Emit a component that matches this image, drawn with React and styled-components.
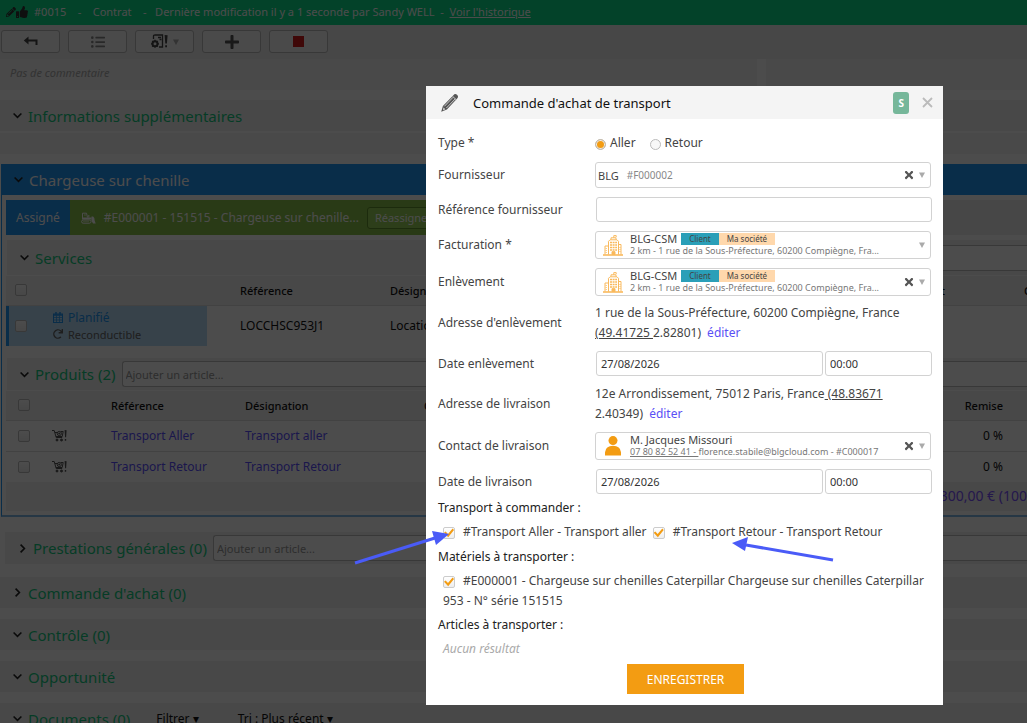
import { useState } from "react";
import { FaListUl, FaPencilAlt, FaPlus, FaRedo, FaThumbsUp, FaTimes } from "react-icons/fa";
import styled, { createGlobalStyle } from "styled-components";

const GlobalStyle = createGlobalStyle`
  * {
    box-sizing: border-box;
  }
  body {
    margin: 0;
    background: #fff;
    color: #444;
    font-family: "Noto Sans", sans-serif;
    font-size: 12px;
  }
  button, input {
    font-family: inherit;
    font-size: inherit;
    color: inherit;
  }
`;

/* ---------- icons ---------- */

const ChevronDown = () => (
  <svg width="9" height="9" viewBox="0 0 9 9" fill="none" stroke="currentColor" strokeWidth="1.6">
    <path d="M0.6 2.5l3.9 3.8 3.9-3.8" />
  </svg>
);

const ChevronRight = () => (
  <svg width="9" height="9" viewBox="0 0 9 9" fill="none" stroke="currentColor" strokeWidth="1.6">
    <path d="M2.6 0.6l3.8 3.9-3.8 3.9" />
  </svg>
);

const CaretIcon = () => (
  <svg width="6" height="6" viewBox="0 0 6 6" fill="#aaa">
    <path d="M0 0.5h6L3 6z" />
  </svg>
);

const ReplyIcon = () => (
  <svg width="15" height="11" viewBox="0 0 15 11" fill="none" stroke="#444" strokeWidth="2">
    <path d="M3 4.5h10.5V9" />
    <path d="M5.5 0.5v8L0.8 4.5z" fill="#444" stroke="none" />
  </svg>
);

const GearDocIcon = () => (
  <svg width="19" height="15" viewBox="0 0 19 15" fill="none" stroke="#444" strokeWidth="1.3">
    <path d="M3.5 5V2.2Q3.5 1 5 1h7.5v12H9" />
    <path d="M8 3.5h3M9.5 5.5h2" />
    <circle cx="5" cy="9.8" r="2.5" strokeWidth="2" />
    <path d="M5 5.8v1.4M5 12.4v1.4M1 9.8h1.4M7.6 9.8H9M2.2 7l1 1M6.8 11.6l1 1M7.8 7l-1 1M3.2 11.6l-1 1" />
    <path d="M14.6 1l3 .2-.7 8.4h-1.6zM15.2 11.3h1.8v2h-1.8z" fill="#444" stroke="none" />
  </svg>
);

const CartIcon = () => (
  <svg width="15" height="13" viewBox="0 0 15 13" fill="none" stroke="#555">
    <path d="M0 1.5h2.2l2 7h6M3 3.5h2M9 2.5h2.2l-1 5H4" />
    <circle cx="7.3" cy="4.5" r="2.1" />
    <path d="M6.4 4.5h1.8M7.3 3.5v2" />
    <circle cx="5" cy="11" r="1" fill="#555" />
    <circle cx="9.5" cy="11" r="1" fill="#555" />
    <path d="M12.6 1l2 .2-.5 7h-1zM12.8 10h1.4v1.8h-1.4z" fill="#555" stroke="none" />
  </svg>
);

const CalendarIcon = () => (
  <svg width="10" height="11" viewBox="0 0 10 11" fill="none" stroke="#2196f3">
    <rect x="0.5" y="2" width="9" height="8.5" />
    <path d="M0.5 3h9M3 0v3M7 0v3" strokeWidth="1.5" />
    <path d="M0.5 5.5h9M0.5 8h9M3.5 3.5v7M6.5 3.5v7" strokeWidth="0.7" />
  </svg>
);

const DozerIcon = () => (
  <svg width="15" height="12" viewBox="0 0 15 12" fill="none" stroke="#fff">
    <path d="M1.5 6V1.2h4l1 4.3M3.2 3h1.6M7.8 5.5V3" />
    <path d="M1 5.5h9.5v2H1z" fill="#fff" stroke="none" />
    <rect x="0.6" y="8" width="9.4" height="3.2" rx="1.6" />
    <path d="M2.5 9.6h5.6" strokeDasharray="1 1" />
    <path d="M10.5 7.5V4.5h1.6l1.2 1.6.4 2.7 1 2.7h-2.6l-1.6-2.5" fill="#fff" stroke="none" />
  </svg>
);

const PencilIcon = () => (
  <svg width="19" height="20" viewBox="0 0 19 20">
    <path d="M1.2 18.8L2.9 13 13.4 2.2Q15-.1 17 1.7q2 1.9.2 3.7L6.9 16.6z" fill="#555" />
    <path d="M4.4 13.3L13 4.3M6.4 15L15.3 5.8" stroke="#e4e4e4" strokeWidth="0.8" />
    <path d="M12.6 3.3l3.6 3.4" stroke="#e4e4e4" strokeWidth="0.8" />
    <path d="M3.4 14.4l2 1.9-2.3.9z" fill="#ddd" />
  </svg>
);

const BuildingIcon = () => (
  <svg width="20" height="21" viewBox="0 0 20 21" fill="none" stroke="#f9b95c">
    <path d="M0 20h20" strokeWidth="1.6" />
    <path d="M5.5 19.5V6.3L7 4.8h7l1.5 1.5v13.2M2 19.5V11h3.5M15.5 9.5H18v10" />
    <path d="M8 4.5V2.8h5v1.7M10.8 2.8V0.6h2.4v1.6" />
    <path d="M7 7.5h7M7 10h7M7 12.5h7M7 15h7" strokeWidth="1.5" strokeDasharray="2 0.6" />
    <path d="M3.2 13v5M17 12v6" strokeDasharray="1 1" />
    <path d="M9 19.5v-2.8h3v2.8z" fill="#f9b95c" />
  </svg>
);

const PersonIcon = () => (
  <svg width="16" height="20" viewBox="0 0 16 20" fill="#f39c12">
    <circle cx="8" cy="4.6" r="4.5" />
    <path d="M0 19.5v-3.2Q0.6 9.8 8 9.8t8 6.5v3.2z" />
  </svg>
);

/* ---------- page behind the dialog ---------- */

const Page = styled.main`
  height: 100vh;
  overflow: hidden;
`;

const TopBar = styled.header`
  display: flex;
  align-items: center;
  height: 25px;
  padding: 0 6px 2px;
  background: #0bdc8a;
  color: #fff;
  font-size: 11px;
  white-space: pre;

  a {
    color: inherit;
  }
`;

const StatusIcon = styled.span`
  display: flex;
  align-items: center;
  width: 28px;
  color: #333;
`;

const Toolbar = styled.div`
  display: flex;
  gap: 8px;
  height: 34px;
  padding: 5px 1px;
  background: #eee;
`;

const ToolButton = styled.button`
  display: flex;
  align-items: center;
  justify-content: center;
  gap: 4px;
  width: 59px;
  height: 23px;
  padding: 0;
  background: #f7f7f7;
  border: 1px solid #bbb;
  border-radius: 3px;
  color: #555;
`;

const RedSquare = styled.span`
  width: 11px;
  height: 11px;
  background: #d31c1c;
`;

const Comments = styled.div`
  display: grid;
  grid-template-columns: 757fr 261fr;
  gap: 9px;
  height: 31px;
  margin-bottom: 10px;

  p {
    margin: 0;
    padding: 0 10px;
    line-height: 28px;
    background: #f3f3f3;
    color: #aaa;
    font-size: 11px;
    font-style: italic;
  }
`;

const Section = styled.section`
  display: flex;
  align-items: center;
  min-height: ${(p) => p.$height || 31}px;
  margin: 0 0 ${(p) => p.$after || 11}px ${(p) => (p.$nested ? 5 : 0)}px;
  padding-left: ${(p) => (p.$blue ? 12 : 13)}px;
  background: ${(p) => (p.$blue ? "#2196f3" : "#f1f1f1")};
  color: #222;

  h2 {
    margin: 0 0 0 6px;
    color: ${(p) => (p.$blue ? "#fff" : "#14c97f")};
    font-size: 15px;
    font-weight: 400;
    white-space: nowrap;
  }
`;

const Panel = styled.div`
  height: 21px;
  margin-bottom: 10px;
  background: #f3f3f3;
`;

const ArticleInput = styled.input`
  flex: 1;
  min-width: 0;
  height: 26px;
  margin-left: 6px;
  padding: 0 3px;
  background: #fff;
  border: 1px solid #bbb;
  border-right: 0;
  border-radius: 3px 0 0 3px;
  font-size: 11px;

  &::placeholder {
    color: #999;
  }
`;

const HiddenSpace = styled.div`
  flex: 0 0 60%;
`;

const FilterButton = styled.button`
  margin-left: 26px;
  padding: 0;
  background: none;
  border: 0;
  color: #111;

  & + & {
    margin-left: 39px;
  }
`;

const Machine = styled.div`
  margin: 0 0 15px 1px;
  border-left: 1px solid #2196f3;
  border-bottom: 2px solid #7fb9e6;
`;

const Assignment = styled.div`
  display: flex;
  align-items: center;
  height: 35px;
  margin: 0 0 5px 4px;
  background: #eee;
  color: #fff;
`;

const Assigned = styled.span`
  padding: 0 10px;
  line-height: 35px;
  background: #2196f3;
`;

const Equipment = styled.div`
  display: flex;
  align-items: center;
  gap: 8px;
  width: 60%;
  height: 35px;
  padding-left: 11px;
  background: #8bc34a;

  button {
    height: 22px;
    padding: 0 7px;
    background: #97cf57;
    border: 1px solid #5f8f2c;
    border-radius: 3px;
    color: #fff;
    font-size: 11px;
  }
`;

const Table = styled.table`
  width: calc(100% - 4px);
  margin: 0 0 ${(p) => p.$after || 0}px 4px;
  border-collapse: collapse;
  table-layout: fixed;
  color: #111;
  white-space: nowrap;

  th {
    height: 29px;
    padding: 0;
    overflow: hidden;
    background: #f1f1f1;
    font-size: 11px;
    font-weight: 500;
    text-align: left;
  }
  td {
    height: ${(p) => p.$row || 31}px;
    padding: 0;
    border-top: 1px solid #ddd;
  }
  th:first-child, td:first-child {
    padding-left: ${(p) => p.$left}px;
  }
  th.amount, td.amount {
    padding-right: ${(p) => p.$right}px;
    text-align: right;
  }
  a {
    color: #5a4fff;
    text-decoration: none;
  }
  input {
    display: grid;
  }
  svg {
    display: block;
  }
`;

const Planned = styled.td`
  background: #b9dcf7;
  box-shadow: inset 3px 0 #2196f3;
`;

const PlannedBody = styled.div`
  display: flex;
  align-items: center;
  gap: 26px;
`;

const State = styled.div`
  display: flex;
  align-items: center;
  gap: 5px;
  height: 17px;
  color: ${(p) => (p.$blue ? "#2196f3" : "#666")};
  font-size: ${(p) => (p.$blue ? 12 : 11)}px;
`;

const Total = styled.div`
  height: 29px;
  margin: 0 0 4px 4px;
  background: #f1f1f1;
  color: #7a52ff;
  font-size: 14px;
  line-height: 28px;
  text-align: right;
`;

const Tick = styled.input.attrs({ type: "checkbox" })`
  display: inline-grid;
  place-items: center;
  flex: none;
  width: 12px;
  height: 12px;
  margin: 0;
  appearance: none;
  background: linear-gradient(#fff, #eee);
  border: 1px solid #bbb;
  border-radius: 2px;

  &:checked {
    border-color: #ccc;
  }
  &:checked::after {
    content: "";
    width: 10px;
    height: 10px;
    background: #f39c12;
    clip-path: polygon(0 48%, 16% 34%, 40% 60%, 86% 6%, 100% 20%, 42% 92%);
  }
`;

/* ---------- dialog ---------- */

const Overlay = styled.div`
  position: fixed;
  inset: 0;
  display: flex;
  justify-content: flex-end;
  align-items: flex-start;
  padding: 86px 84px 0 20px;
  background: rgba(0, 0, 0, 0.7);
`;

const Dialog = styled.form`
  width: 100%;
  max-width: 517px;
  background: #fff;
`;

const DialogHeader = styled.div`
  display: flex;
  align-items: center;
  height: 33px;
  padding: 0 10px 0 14px;
  background: #f4f4f4;

  h1 {
    flex: 1;
    margin: 0 0 0 14px;
    color: #111;
    font-size: 13px;
    font-weight: 400;
  }
`;

const Shortcut = styled.span`
  margin-right: 13px;
  padding: 0 5px;
  background: #76b79a;
  border-radius: 3px;
  color: #fff;
  font-size: 10px;
  font-weight: 700;
  line-height: 22px;
`;

const IconButton = styled.button`
  display: flex;
  padding: 0;
  background: none;
  border: 0;
  color: ${(p) => p.$color || "#555"};
`;

const Body = styled.div`
  padding: 14px 10px 11px 12px;
`;

const Row = styled.div`
  display: grid;
  grid-template-columns: 157px 1fr;
  align-items: center;
  margin-bottom: ${(p) => p.$after || 9}px;
  line-height: 20px;
`;

const Radios = styled.div`
  display: flex;
  gap: 14px;

  label {
    display: flex;
    align-items: center;
    gap: 4px;
  }
  input {
    width: 11px;
    height: 11px;
    margin: 2px 0 0;
    appearance: none;
    background: #f8f8f8;
    border: 1px solid #bbb;
    border-radius: 50%;
  }
  input:checked {
    background: #f39c12;
    box-shadow: inset 0 0 0 1px #eee;
  }
`;

const Combo = styled.div`
  display: flex;
  align-items: center;
  gap: 4px;
  min-width: 0;
  height: ${(p) => (p.$small ? 26 : 28)}px;
  margin-right: 2px;
  padding-right: 5px;
  border: 1px solid #d2d2d2;
  border-radius: 3px;
`;

const ComboValue = styled.button`
  display: flex;
  align-items: center;
  flex: 1;
  min-width: 0;
  height: 100%;
  padding: 0 0 0 ${(p) => (p.$small ? 2 : 7)}px;
  gap: ${(p) => (p.$small ? 8 : 7)}px;
  background: none;
  border: 0;
  font-size: 11px;
  text-align: left;
  white-space: nowrap;

  svg {
    flex: none;
  }
`;

const Code = styled.span`
  color: #888;
  font-size: 10px;
`;

const IconSlot = styled.span`
  display: flex;
  flex: none;
  justify-content: center;
  width: 20px;
`;

const Company = styled.span`
  display: flex;
  flex-direction: column;

  > span {
    display: flex;
    align-items: center;
    height: 12px;
    line-height: 12px;
  }
  > small {
    color: #777;
    font-size: 9px;
    line-height: 12px;
  }
`;

const Tag = styled.span`
  margin-left: ${(p) => (p.$first ? 4 : 0)}px;
  padding: 0 8px;
  background: ${(p) => p.$color};
  color: #444;
  font-size: 8px;
`;

const TextInput = styled.input`
  width: 100%;
  min-width: 0;
  height: 25px;
  padding: 0 4px;
  background: #fff;
  border: 1px solid #d2d2d2;
  border-radius: 3px;
  color: #333;
  font-size: 11px;
`;

const Shifted = styled.div`
  display: grid;
  grid-template-columns: ${(p) => (p.$pair ? "227px 1fr" : "1fr")};
  gap: 2px;
  padding: 0 1px;
`;

const Address = styled.div`
  a {
    margin-left: 3px;
    color: #5a50f5;
    text-decoration: none;
  }
`;

const Heading = styled.h2`
  margin: 0 0 4px;
  color: #222;
  font-size: 12px;
  font-weight: 400;
  line-height: 20px;
`;

const Choices = styled.div`
  position: relative;
  margin-bottom: ${(p) => p.$after || 5}px;
  padding-left: 5px;
  line-height: 20px;

  label {
    margin-right: 3px;
  }
  input {
    margin-right: 8px;
    vertical-align: -2px;
  }
`;

const Arrow = styled.svg`
  position: absolute;
  top: ${(p) => p.$top}px;
  left: ${(p) => p.$left}px;
  overflow: visible;
  pointer-events: none;
`;

const Empty = styled.p`
  margin: 0 0 5px;
  padding-left: 5px;
  color: #aaa;
  font-style: italic;
  line-height: 20px;
`;

const SaveButton = styled.button`
  display: block;
  height: 30px;
  margin: 0 auto;
  padding: 0 20px;
  background: #f39c12;
  border: 0;
  color: #fff;
`;

const CompanyValue = () => (
  <>
    <IconSlot><BuildingIcon /></IconSlot>
    <Company>
      <span>
        BLG-CSM
        <Tag $first $color="#2a9fb8">Client</Tag>
        <Tag $color="#ffd8ac">Ma société</Tag>
      </span>
      <small>2 km - 1 rue de la Sous-Préfecture, 60200 Compiègne, Fra...</small>
    </Company>
  </>
);

const ComboBox = ({ labelId, small, clearable, children }) => (
  <Combo $small={small}>
    <ComboValue type="button" aria-haspopup="listbox" aria-labelledby={labelId} $small={small}>
      {children}
    </ComboValue>
    {clearable && (
      <IconButton type="button" aria-label="Effacer">
        <FaTimes size={12} />
      </IconButton>
    )}
    <CaretIcon />
  </Combo>
);

const DateRow = ({ id, label, after }) => (
  <Row $after={after}>
    <label htmlFor={id}>{label}</label>
    <Shifted $pair>
      <TextInput id={id} defaultValue="27/08/2026" />
      <TextInput aria-label={`${label} heure`} defaultValue="00:00" />
    </Shifted>
  </Row>
);

const TransportDialog = () => {
  const [type, setType] = useState("aller");

  return (
    <Dialog role="dialog" aria-labelledby="dialog-title" onSubmit={(e) => e.preventDefault()}>
      <DialogHeader>
        <PencilIcon />
        <h1 id="dialog-title">Commande d'achat de transport</h1>
        <Shortcut>S</Shortcut>
        <IconButton type="button" aria-label="Fermer" $color="#bbb">
          <svg width="11" height="11" viewBox="0 0 11 11" stroke="currentColor" strokeWidth="1.8">
            <path d="M1 1l9 9M10 1l-9 9" />
          </svg>
        </IconButton>
      </DialogHeader>
      <Body>
        <Row>
          <span>Type *</span>
          <Radios>
            <label><input type="radio" name="type" checked={type === "aller"} onChange={() => setType("aller")} />Aller</label>
            <label><input type="radio" name="type" checked={type === "retour"} onChange={() => setType("retour")} />Retour</label>
          </Radios>
        </Row>
        <Row>
          <span id="fournisseur">Fournisseur</span>
          <ComboBox labelId="fournisseur" small clearable>BLG <Code>#F000002</Code></ComboBox>
        </Row>
        <Row>
          <label htmlFor="reference">Référence fournisseur</label>
          <Shifted><TextInput id="reference" /></Shifted>
        </Row>
        <Row>
          <span id="facturation">Facturation *</span>
          <ComboBox labelId="facturation"><CompanyValue /></ComboBox>
        </Row>
        <Row $after={7}>
          <span id="enlevement">Enlèvement</span>
          <ComboBox labelId="enlevement" clearable><CompanyValue /></ComboBox>
        </Row>
        <Row $after={8}>
          <span>Adresse d'enlèvement</span>
          <Address>
            1 rue de la Sous-Préfecture, 60200 Compiègne, France <u>(49.41725 </u>2.82801) <a href="#enlevement">éditer</a>
          </Address>
        </Row>
        <DateRow id="date-enlevement" label="Date enlèvement" after={8} />
        <Row $after={8}>
          <span>Adresse de livraison</span>
          <Address>
            12e Arrondissement, 75012 Paris, France<u> (48.83671</u> 2.40349) <a href="#livraison">éditer</a>
          </Address>
        </Row>
        <Row>
          <span id="contact">Contact de livraison</span>
          <ComboBox labelId="contact" clearable>
            <IconSlot><PersonIcon /></IconSlot>
            <Company>
              <span>M. Jacques Missouri</span>
              <small><u>07 80 82 52 41 - </u>florence.stabile@blgcloud.com - #C000017</small>
            </Company>
          </ComboBox>
        </Row>
        <DateRow id="date-livraison" label="Date de livraison" after={4} />

        <Heading>Transport à commander :</Heading>
        <Choices>
          <label><Tick defaultChecked />#Transport Aller - Transport aller</label>{" "}
          <label><Tick defaultChecked />#Transport Retour - Transport Retour</label>
          <Arrow $top={10} $left={-83} width="96" height="34" fill="#4a5bf7" stroke="#4a5bf7">
            <path d="M0 31L80 6" strokeWidth="3" />
            <path d="M94 2L77 -1l4 14z" stroke="none" />
          </Arrow>
          <Arrow $top={19} $left={294} width="102" height="22" fill="#4a5bf7" stroke="#4a5bf7">
            <path d="M101 19L14 4" strokeWidth="3" />
            <path d="M0 2L16 -4l-3 14z" stroke="none" />
          </Arrow>
        </Choices>
        <Heading>Matériels à transporter :</Heading>
        <Choices $after={4}>
          <label>
            <Tick defaultChecked />#E000001 - Chargeuse sur chenilles Caterpillar Chargeuse sur chenilles Caterpillar 953 - N° série 151515
          </label>
        </Choices>
        <Heading>Articles à transporter :</Heading>
        <Empty>Aucun résultat</Empty>
        <SaveButton type="submit">ENREGISTRER</SaveButton>
      </Body>
    </Dialog>
  );
};

const products = [
  { ref: "Transport Aller", name: "Transport aller" },
  { ref: "Transport Retour", name: "Transport Retour" },
];

const App = () => {
  return (
    <>
      <GlobalStyle />
      <Page>
        <TopBar>
          <StatusIcon><FaPencilAlt size={10} /><FaThumbsUp size={12} /></StatusIcon>
          #0015    -    Contrat    -   Dernière modification il y a 1 seconde par Sandy WELL  -  <a href="#historique">Voir l'historique</a>
        </TopBar>
        <Toolbar>
          <ToolButton aria-label="Retour"><ReplyIcon /></ToolButton>
          <ToolButton aria-label="Liste"><FaListUl size={14} color="#888" /></ToolButton>
          <ToolButton aria-label="Actions"><GearDocIcon /><CaretIcon /></ToolButton>
          <ToolButton aria-label="Ajouter"><FaPlus size={16} /></ToolButton>
          <ToolButton aria-label="Arrêter"><RedSquare /></ToolButton>
        </Toolbar>
        <Comments>
          <p>Pas de commentaire</p>
          <p />
        </Comments>
        <Section $after={2}><ChevronDown /><h2>Informations supplémentaires</h2></Section>
        <Panel />

        <Machine>
          <Section $blue $after={5}><ChevronDown /><h2>Chargeuse sur chenille</h2></Section>
          <Assignment>
            <Assigned>Assigné</Assigned>
            <Equipment>
              <DozerIcon />
              #E000001 - 151515 - Chargeuse sur chenille...
              <button>Réassigner</button>
            </Equipment>
          </Assignment>
          <Section $nested $height={35} $after={1}>
            <ChevronDown /><h2>Services</h2>
            <HiddenSpace />
            <ArticleInput aria-label="Ajouter un service" />
          </Section>
          <Table $left={9} $right={79} $row={41} $after={12}>
            <colgroup>
              <col style={{ width: 201 }} /><col style={{ width: 33 }} /><col style={{ width: 150 }} /><col /><col style={{ width: 140 }} /><col style={{ width: 3 }} />
            </colgroup>
            <thead>
              <tr>
                <th><Tick aria-label="Tout sélectionner" /></th>
                <th />
                <th>Référence</th>
                <th>Désignation</th>
                <th className="amount">Montant</th>
                <th>Qté</th>
              </tr>
            </thead>
            <tbody>
              <tr>
                <Planned>
                  <PlannedBody>
                    <Tick aria-label="LOCCHSC953J1" />
                    <div>
                      <State $blue><CalendarIcon />Planifié</State>
                      <State><FaRedo size={10} />Reconductible</State>
                    </div>
                  </PlannedBody>
                </Planned>
                <td /><td>LOCCHSC953J1</td><td>Location</td><td /><td />
              </tr>
            </tbody>
          </Table>
          <Section $nested $height={32} $after={1}>
            <ChevronDown /><h2>Produits (2)</h2>
            <ArticleInput aria-label="Ajouter un produit" placeholder="Ajouter un article..." />
          </Section>
          <Table $left={12} $right={24}>
            <colgroup>
              <col style={{ width: 46 }} /><col style={{ width: 59 }} /><col style={{ width: 134 }} /><col style={{ width: 179 }} /><col /><col style={{ width: 90 }} />
            </colgroup>
            <thead>
              <tr>
                <th><Tick aria-label="Tout sélectionner" /></th>
                <th />
                <th>Référence</th>
                <th>Désignation</th>
                <th>Qté</th>
                <th className="amount">Remise</th>
              </tr>
            </thead>
            <tbody>
              {products.map((p) => (
                <tr key={p.ref}>
                  <td><Tick aria-label={p.ref} /></td>
                  <td><CartIcon /></td>
                  <td><a href="#produit">{p.ref}</a></td>
                  <td><a href="#produit">{p.name}</a></td>
                  <td />
                  <td className="amount">0 %</td>
                </tr>
              ))}
            </tbody>
          </Table>
          <Total>300,00 € (100</Total>
        </Machine>

        <Section $nested $height={32} $after={13}>
          <ChevronRight /><h2>Prestations générales (0)</h2>
          <ArticleInput aria-label="Ajouter une prestation" placeholder="Ajouter un article..." />
        </Section>
        <Section><ChevronRight /><h2>Commande d'achat (0)</h2></Section>
        <Section><ChevronDown /><h2>Contrôle (0)</h2></Section>
        <Section><ChevronDown /><h2>Opportunité</h2></Section>
        <Section>
          <ChevronDown /><h2>Documents (0)</h2>
          <FilterButton>Filtrer ▾</FilterButton>
          <FilterButton>Tri : Plus récent ▾</FilterButton>
        </Section>
      </Page>
      <Overlay>
        <TransportDialog />
      </Overlay>
    </>
  );
};

export default App;
